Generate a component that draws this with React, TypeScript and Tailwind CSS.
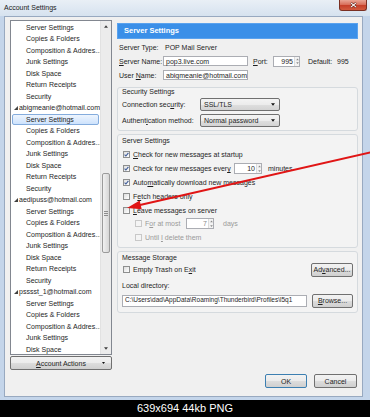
import React from 'react';

type TreeItem = { label: string; account?: boolean; selected?: boolean };

const childLabels = [
  'Server Settings',
  'Copies & Folders',
  'Composition & Addres...',
  'Junk Settings',
  'Disk Space',
  'Return Receipts',
  'Security',
];

const treeItems: TreeItem[] = [
  ...childLabels.map((label) => ({ label })),
  { label: 'abigmeanie@hotmail.com', account: true },
  ...childLabels.map((label, i) => ({ label, selected: i === 0 })),
  { label: 'aedipuss@hotmail.com', account: true },
  ...childLabels.map((label) => ({ label })),
  { label: 'psssst_1@hotmail.com', account: true },
  ...childLabels.slice(0, 5).map((label) => ({ label })),
];

function Checkbox({ checked = false, disabled = false }: { checked?: boolean; disabled?: boolean }) {
  return (
    <span
      className={
        disabled
          ? 'w-[7px] h-[7px] shrink-0 border border-[#c8c8c8] bg-[#f4f4f4] flex items-center justify-center'
          : 'w-[7px] h-[7px] shrink-0 border border-[#8e8f8f] bg-gradient-to-br from-[#dedede] to-white flex items-center justify-center'
      }
    >
      {checked && (
        <svg viewBox="0 0 5 5" className="w-[5px] h-[5px]">
          <path d="M0.6 2.6 L1.9 4 L4.4 0.8" stroke="#3d5a98" strokeWidth="1.1" fill="none" />
        </svg>
      )}
    </span>
  );
}

function Spinner({ value, className, disabled = false }: { value: string; className: string; disabled?: boolean }) {
  return (
    <div className={`h-[11px] border border-[#abadb3] bg-white flex items-stretch ${className}`}>
      <span className={`flex-1 flex items-center justify-end pr-[1px] ${disabled ? 'text-[#8a8a8a]' : ''}`}>{value}</span>
      <span className="w-[5px] flex flex-col border-l border-[#dcdcdc] bg-[#f3f3f3]">
        <svg viewBox="0 0 5 4" className="w-[5px] h-[4.5px]">
          <path d="M1.2 3 L2.5 1.3 L3.8 3 Z" fill="#8a8a8a" />
        </svg>
        <svg viewBox="0 0 5 4" className="w-[5px] h-[4.5px]">
          <path d="M1.2 1 L2.5 2.7 L3.8 1 Z" fill="#8a8a8a" />
        </svg>
      </span>
    </div>
  );
}

function Select({ value }: { value: string }) {
  return (
    <div className="w-[80px] h-[13px] border border-[#707070] rounded-[2px] bg-[linear-gradient(#f4f4f4_0%,#ececec_50%,#dfdfdf_51%,#d3d3d3_100%)] flex items-center justify-between pl-[3px] pr-[4px]">
      <span>{value}</span>
      <svg viewBox="0 0 5 3" className="w-[4px] h-[3px]">
        <path d="M0 0 L5 0 L2.5 3 Z" fill="#111" />
      </svg>
    </div>
  );
}

function Button({ children, className = '', primary = false }: { children: React.ReactNode; className?: string; primary?: boolean }) {
  return (
    <div
      className={`h-[14px] rounded-[2px] border ${
        primary ? 'border-[#3c7fb1]' : 'border-[#707070]'
      } bg-[linear-gradient(#f2f2f2_0%,#ebebeb_50%,#dddddd_51%,#cfcfcf_100%)] flex items-center justify-center ${className}`}
    >
      {children}
    </div>
  );
}

function AccountTree() {
  return (
    <div className="h-[335px] border border-[#828790] bg-white flex">
      <div className="flex-1 pt-[0.5px] overflow-hidden">
        {treeItems.map((item, i) =>
          item.account ? (
            <div key={i} className="h-[11.5px] flex items-center pl-[3px] whitespace-nowrap">
              <svg viewBox="0 0 4 4" className="w-[4px] h-[4px] mr-[1px]">
                <path d="M4 0 L4 4 L0 4 Z" fill="#404040" />
              </svg>
              {item.label}
            </div>
          ) : item.selected ? (
            <div
              key={i}
              className="h-[11.5px] mx-[1px] pl-[13px] flex items-center border border-[#84acdd] rounded-[2px] bg-gradient-to-b from-[#eef5fe] to-[#cde2fc] whitespace-nowrap"
            >
              {item.label}
            </div>
          ) : (
            <div key={i} className="h-[11.5px] flex items-center pl-[15px] whitespace-nowrap">
              {item.label}
            </div>
          ),
        )}
      </div>
      {/* scrollbar */}
      <div className="w-[11px] flex flex-col bg-[#ececec] border-l border-[#e2e2e2]">
        <div className="h-[11px] flex items-center justify-center">
          <svg viewBox="0 0 5 3" className="w-[4px] h-[3px]">
            <path d="M0 3 L5 3 L2.5 0 Z" fill="#404040" />
          </svg>
        </div>
        <div className="flex-1 flex flex-col px-[1px]">
          <div className="h-[141px]" />
          <div className="h-[80px] rounded-[2px] border border-[#9b9b9b] bg-gradient-to-r from-[#f1f1f1] to-[#d6d6d6] flex flex-col items-center justify-center gap-[1px]">
            <span className="w-[4px] h-px bg-[#8d8d8d]" />
            <span className="w-[4px] h-px bg-[#8d8d8d]" />
            <span className="w-[4px] h-px bg-[#8d8d8d]" />
          </div>
        </div>
        <div className="h-[11px] flex items-center justify-center">
          <svg viewBox="0 0 5 3" className="w-[4px] h-[3px]">
            <path d="M0 0 L5 0 L2.5 3 Z" fill="#404040" />
          </svg>
        </div>
      </div>
    </div>
  );
}

function Group({ title, children, className = '' }: { title: string; children: React.ReactNode; className?: string }) {
  return (
    <div className={`border border-[#d5dade] rounded-[3px] bg-[#f3f3f3] ${className}`}>
      <div className="h-[7px] pl-[4px] flex items-center">{title}</div>
      {children}
    </div>
  );
}

function CheckRow({ checked, disabled, indent, children }: { checked?: boolean; disabled?: boolean; indent?: boolean; children: React.ReactNode }) {
  return (
    <div className={`h-[13.8px] flex items-center gap-[3px] ${indent ? 'pl-[17px]' : 'pl-[5px]'} ${disabled ? 'text-[#9a9a9a]' : ''}`}>
      <Checkbox checked={checked} disabled={disabled} />
      {children}
    </div>
  );
}

function ServerPanel() {
  return (
    <div className="flex-1 flex flex-col pt-[3px]">
      <div className="h-[16px] bg-[#3a8fe8] border border-[#5aa2ee] text-white font-bold text-[7.5px] flex items-center pl-[6px]">
        Server Settings
      </div>

      <div className="mt-[1px] pl-[2px]">
        <div className="h-[14px] flex items-center">
          <span className="w-[46px]">Server Type:</span>
          <span>POP Mail Server</span>
        </div>
        <div className="h-[14px] flex items-center">
          <span className="w-[44px]">
            <u>S</u>erver Name:
          </span>
          <div className="w-[85px] h-[10px] border border-[#abadb3] bg-white flex items-center pl-[2px]">pop3.live.com</div>
          <span className="ml-[5px] w-[20px]">
            <u>P</u>ort:
          </span>
          <Spinner value="995" className="w-[27px]" />
          <span className="ml-[8px] w-[29px]">Default:</span>
          <span>995</span>
        </div>
        <div className="h-[14px] flex items-center">
          <span className="w-[44px]">
            User <u>N</u>ame:
          </span>
          <div className="w-[85px] h-[10px] border border-[#abadb3] bg-white flex items-center pl-[2px] overflow-hidden whitespace-nowrap">
            abigmeanie@hotmail.com
          </div>
        </div>
      </div>

      <Group title="Security Settings" className="mt-[5px] pt-[0px] pb-[3px]">
        <div className="mt-[3px] h-[13px] flex items-center pl-[4px]">
          <span className="w-[78px]">
            Connection sec<u>u</u>rity:
          </span>
          <Select value="SSL/TLS" />
        </div>
        <div className="mt-[3px] h-[13px] flex items-center pl-[4px]">
          <span className="w-[78px]">
            Authent<u>i</u>cation method:
          </span>
          <Select value="Normal password" />
        </div>
      </Group>

      <Group title="Server Settings" className="mt-[3px] pt-[2px] pb-[2px]">
        <div className="mt-[4px]">
          <CheckRow checked>
            <span>
              <u>C</u>heck for new messages at startup
            </span>
          </CheckRow>
          <CheckRow checked>
            <span className="w-[98px]">
              Check for new messages ever<u>y</u>
            </span>
            <Spinner value="10" className="w-[28px]" />
            <span className="ml-[3px]">minutes</span>
          </CheckRow>
          <CheckRow checked>
            <span>
              Auto<u>m</u>atically download new messages
            </span>
          </CheckRow>
          <CheckRow>
            <span>
              F<u>e</u>tch headers only
            </span>
          </CheckRow>
          <CheckRow>
            <span>
              <u>L</u>eave messages on server
            </span>
          </CheckRow>
          <CheckRow disabled indent>
            <span className="w-[38px]">
              F<u>o</u>r at most
            </span>
            <Spinner value="7" className="w-[28px]" disabled />
            <span className="ml-[6px]">days</span>
          </CheckRow>
          <CheckRow disabled indent>
            <span>
              Until <u>I</u> delete them
            </span>
          </CheckRow>
        </div>
      </Group>

      <Group title="Message Storage" className="mt-[3px] pt-[2px] pb-[4px]">
        <div className="mt-[2px] h-[14px] flex items-center gap-[3px] pl-[5px] pr-[4px]">
          <Checkbox />
          <span>
            Empty Trash on E<u>x</u>it
          </span>
          <Button className="ml-auto w-[42px]">
            <span>
              Ad<u>v</u>anced...
            </span>
          </Button>
        </div>
        <div className="mt-[4px] h-[9px] flex items-center pl-[4px]">Local directory:</div>
        <div className="mt-[4px] h-[14px] flex items-center pl-[4px] pr-[4px]">
          <div className="w-[185px] h-[12px] border border-[#abadb3] bg-white flex items-center pl-[2px] overflow-hidden whitespace-nowrap text-[6.5px]">
            C:\Users\dad\AppData\Roaming\Thunderbird\Profiles\l5q1
          </div>
          <Button className="ml-auto w-[41px]">
            <span>
              <u>B</u>rowse...
            </span>
          </Button>
        </div>
      </Group>

      <div className="mt-auto flex justify-end gap-[7px] pr-[1px]">
        <Button primary className="w-[42px]">
          OK
        </Button>
        <Button className="w-[43px]">Cancel</Button>
      </div>
    </div>
  );
}

export default function App() {
  return (
    <div className="relative w-[370px] h-[417px] bg-black overflow-hidden font-['Liberation_Sans',Arial,sans-serif] text-[7px] leading-none text-[#1e1e1e]">
      <div className="h-[400px] flex flex-col bg-[#c4d5ea]">
        {/* title bar */}
        <div className="h-[16px] flex items-start bg-gradient-to-b from-[#e9eff6] to-[#d6e2ef]">
          <span className="pl-[4px] pt-[4px] text-[7px] text-[#1a1a1a]">Account Settings</span>
          <div className="ml-auto mr-[3px] w-[28px] h-[11px] rounded-b-[3px] border border-t-0 border-[#7a2f22] bg-[linear-gradient(#e9a595_0%,#d9705c_45%,#c6402a_55%,#d25a3e_100%)] flex items-center justify-center">
            <svg viewBox="0 0 8 7" className="w-[7px] h-[6px]">
              <path d="M1 1 L7 6 M7 1 L1 6" stroke="#5a1a10" strokeWidth="2.4" />
              <path d="M1 1 L7 6 M7 1 L1 6" stroke="#ffffff" strokeWidth="1.3" />
            </svg>
          </div>
        </div>

        {/* dialog body */}
        <div className="flex-1 ml-[4px] mr-[7px] mb-[3px] bg-[#f0f0f0] border border-[#98a9c0] flex gap-[5px] pt-[3px] pl-[5px] pr-[4px] pb-[8px]">
          <div className="w-[102px] flex flex-col">
            <AccountTree />
            <Button className="mt-[1px] h-[13px] relative">
              <span>
                <u>A</u>ccount Actions
              </span>
              <svg viewBox="0 0 5 3" className="absolute right-[6px] top-[5px] w-[3px] h-[2px]">
                <path d="M0 0 L5 0 L2.5 3 Z" fill="#111" />
              </svg>
            </Button>
          </div>
          <ServerPanel />
        </div>
      </div>

      {/* image info bar */}
      <div className="h-[17px] flex items-center justify-center text-white text-[11px]">639x694 44kb PNG</div>

      {/* red annotation arrow */}
      <svg className="absolute inset-0 pointer-events-none" width="370" height="417" viewBox="0 0 370 417">
        <line x1="372" y1="152" x2="140" y2="205" stroke="#e01515" strokeWidth="2" />
        <path d="M127 208 L141.7 209.3 L139.7 200.5 Z" fill="#e01515" />
      </svg>
    </div>
  );
}
